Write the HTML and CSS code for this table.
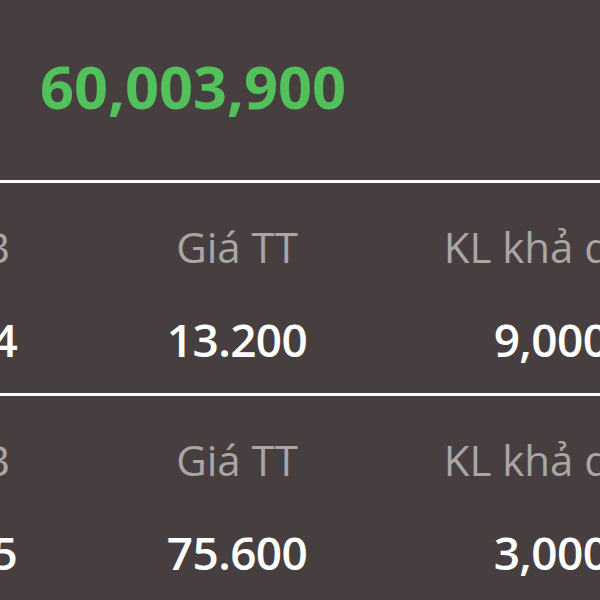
FILE: index.html
```html
<!DOCTYPE html>
<html lang="vi">
<head>
<meta charset="utf-8">
<link rel="stylesheet" href="styles.css">
</head>
<body>
<div class="screen">
  <div class="summary"><span class="total">60,003,900</span></div>
  <div class="divider"></div>
  <div class="row">
    <div class="col col-a">
      <div class="label">Giá TB</div>
      <div class="value">12.854</div>
    </div>
    <div class="col col-b">
      <div class="label">Giá TT</div>
      <div class="value">13.200</div>
    </div>
    <div class="col col-c">
      <div class="label">KL khả dụng</div>
      <div class="value">9,000</div>
    </div>
  </div>
  <div class="divider"></div>
  <div class="row">
    <div class="col col-a">
      <div class="label">Giá TB</div>
      <div class="value">74.125</div>
    </div>
    <div class="col col-b">
      <div class="label">Giá TT</div>
      <div class="value">75.600</div>
    </div>
    <div class="col col-c">
      <div class="label">KL khả dụng</div>
      <div class="value">3,000</div>
    </div>
  </div>
</div>
</body>
</html>
```
FILE: styles.css
```css
html, body {
  margin: 0;
  padding: 0;
  background: #473f3f;
  overflow: hidden;
}
.screen {
  width: 600px;
  height: 600px;
  overflow: hidden;
  font-family: "Open Sans", "Noto Sans", sans-serif;
}
.summary {
  height: 180px;
  box-sizing: border-box;
  padding: 46px 0 0 40px;
}
.total {
  font-size: 59.5px;
  font-weight: 700;
  color: #52c15b;
  line-height: 80px;
}
.divider {
  height: 3px;
  background: #ffffff;
}
.row {
  display: flex;
  height: 210px;
  box-sizing: border-box;
  padding-top: 39px;
  margin-left: -198px;
}
.col {
  flex: none;
  text-align: center;
  white-space: nowrap;
}
.col-a, .col-b { width: 290px; }
.col-c { width: 364px; }
.label {
  font-size: 42px;
  line-height: 50px;
  color: #aaa6a6;
}
.value {
  margin-top: 39px;
  font-size: 46px;
  line-height: 56px;
  font-weight: 600;
  letter-spacing: -0.6px;
  color: #ffffff;
}
.col-c .value {
  padding-right: 26px;
}
```
